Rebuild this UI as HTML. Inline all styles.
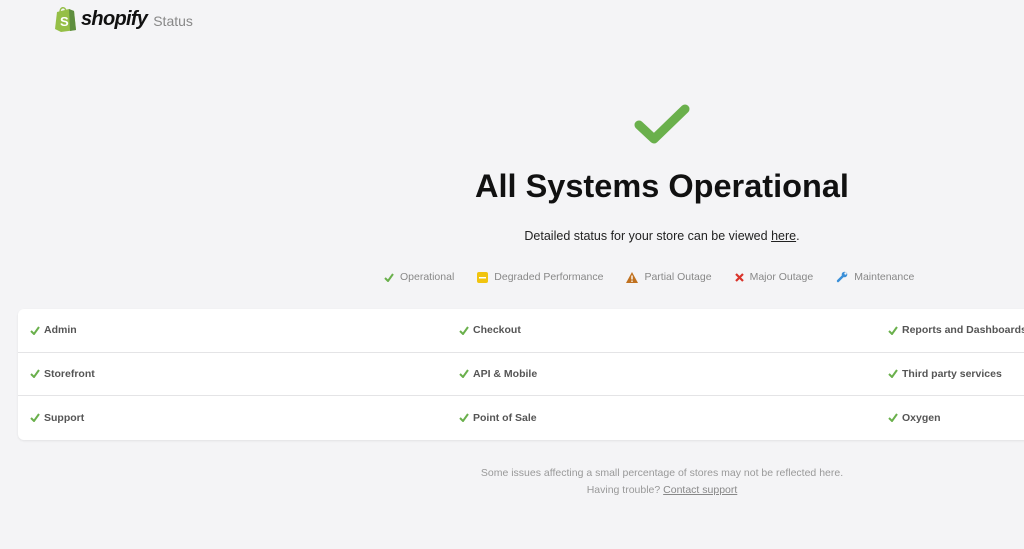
<!DOCTYPE html>
<html><head><meta charset="utf-8"><style>
*{margin:0;padding:0;box-sizing:border-box}
body{width:1024px;height:549px;overflow:hidden;background:#f4f4f6;font-family:"Liberation Sans",sans-serif;color:#333;position:relative}
.logo{position:absolute;left:54px;top:6px;display:flex;align-items:center}
.logo .w{font-weight:bold;font-style:italic;font-size:20px;color:#111;margin-left:4px;letter-spacing:-0.7px}
.logo .s{font-size:14px;color:#888;margin-left:6px;margin-top:4px}
.big{position:absolute;left:634px;top:104px}
h1{position:absolute;left:0;width:1324px;text-align:center;top:168px;font-size:32.5px;font-weight:bold;color:#111}
.det{position:absolute;left:0;width:1324px;text-align:center;top:229px;font-size:12.5px;color:#222}
.det u{color:#222}
.legend{position:absolute;top:271px;left:384px;font-size:10.5px;color:#888;display:flex;align-items:center}
.legend span{display:flex;align-items:center;margin-right:23px}
.legend svg{margin-right:6px}
.card{position:absolute;left:18px;top:309px;width:1288px;background:#fff;border-radius:6px;box-shadow:0 1px 2px rgba(0,0,0,.08)}
.row{display:flex;height:43.5px;border-bottom:1px solid #e4e4e6;align-items:center}
.row:last-child{border-bottom:none}
.c{width:429px;padding-left:12px;font-size:10.5px;font-weight:bold;color:#555;display:flex;align-items:center}
.c svg{margin-right:4px}
.foot{position:absolute;left:0;width:1324px;text-align:center;top:465px;font-size:10.5px;color:#999;line-height:16.5px}
.foot u{color:#888}
</style></head><body>
<div class="logo">
<svg width="23" height="26" viewBox="0 0 23 26"><path d="M3 6 L15 3 L20 5 L22 24 L7 26 L1 23 Z" fill="#95bf47"/><path d="M15 3 L20 5 L22 24 L16 25 Z" fill="#5e8e3e"/><path d="M6 6 C6 1 11 0 12 5" stroke="#95bf47" stroke-width="1.5" fill="none"/><text x="6" y="20" font-size="13" font-weight="bold" fill="#fff" font-family="Liberation Sans">S</text></svg>
<span class="w">shopify</span><span class="s">Status</span>
</div>
<svg class="big" width="56" height="42" viewBox="0 0 56 42"><path d="M5 21 L20 35 L51 5" stroke="#6ab04c" stroke-width="9" stroke-linecap="round" stroke-linejoin="round" fill="none"/></svg>
<h1>All Systems Operational</h1>
<div class="det">Detailed status for your store can be viewed <u>here</u>.</div>
<div class="legend">
<span><svg width="10" height="9" viewBox="0 0 10 9"><path d="M1 5 L4 8 L9 1" stroke="#6ab04c" stroke-width="2" fill="none"/></svg>Operational</span>
<span><svg width="11" height="11" viewBox="0 0 11 11"><rect x="0" y="0" width="11" height="11" rx="2" fill="#f1c40f"/><rect x="2" y="5" width="7" height="1.5" fill="#fff"/></svg>Degraded Performance</span>
<span><svg width="12" height="11" viewBox="0 0 12 11"><path d="M6 0 L12 11 L0 11 Z" fill="#c0711f"/><rect x="5.3" y="3.5" width="1.4" height="4" fill="#fff"/><rect x="5.3" y="8.5" width="1.4" height="1.4" fill="#fff"/></svg>Partial Outage</span>
<span><svg width="9" height="9" viewBox="0 0 9 9"><path d="M1 1 L8 8 M8 1 L1 8" stroke="#d9342b" stroke-width="2.2"/></svg>Major Outage</span>
<span><svg width="12" height="12" viewBox="0 0 12 12"><path d="M2 10 L7 5" stroke="#3a8fd8" stroke-width="2.4" stroke-linecap="round"/><circle cx="8.5" cy="3.5" r="2.8" fill="#3a8fd8"/><circle cx="9.5" cy="2.5" r="1.2" fill="#f4f4f6"/></svg>Maintenance</span>
</div>
<div class="card">
<div class="row"><div class="c"><svg width="10" height="9" viewBox="0 0 10 9"><path d="M1 5 L4 8 L9 1" stroke="#6ab04c" stroke-width="2" fill="none"/></svg>Admin</div><div class="c"><svg width="10" height="9" viewBox="0 0 10 9"><path d="M1 5 L4 8 L9 1" stroke="#6ab04c" stroke-width="2" fill="none"/></svg>Checkout</div><div class="c"><svg width="10" height="9" viewBox="0 0 10 9"><path d="M1 5 L4 8 L9 1" stroke="#6ab04c" stroke-width="2" fill="none"/></svg>Reports and Dashboards</div></div>
<div class="row"><div class="c"><svg width="10" height="9" viewBox="0 0 10 9"><path d="M1 5 L4 8 L9 1" stroke="#6ab04c" stroke-width="2" fill="none"/></svg>Storefront</div><div class="c"><svg width="10" height="9" viewBox="0 0 10 9"><path d="M1 5 L4 8 L9 1" stroke="#6ab04c" stroke-width="2" fill="none"/></svg>API &amp; Mobile</div><div class="c"><svg width="10" height="9" viewBox="0 0 10 9"><path d="M1 5 L4 8 L9 1" stroke="#6ab04c" stroke-width="2" fill="none"/></svg>Third party services</div></div>
<div class="row"><div class="c"><svg width="10" height="9" viewBox="0 0 10 9"><path d="M1 5 L4 8 L9 1" stroke="#6ab04c" stroke-width="2" fill="none"/></svg>Support</div><div class="c"><svg width="10" height="9" viewBox="0 0 10 9"><path d="M1 5 L4 8 L9 1" stroke="#6ab04c" stroke-width="2" fill="none"/></svg>Point of Sale</div><div class="c"><svg width="10" height="9" viewBox="0 0 10 9"><path d="M1 5 L4 8 L9 1" stroke="#6ab04c" stroke-width="2" fill="none"/></svg>Oxygen</div></div>
</div>
<div class="foot">Some issues affecting a small percentage of stores may not be reflected here.<br>Having trouble? <u>Contact support</u></div>
</body></html>
